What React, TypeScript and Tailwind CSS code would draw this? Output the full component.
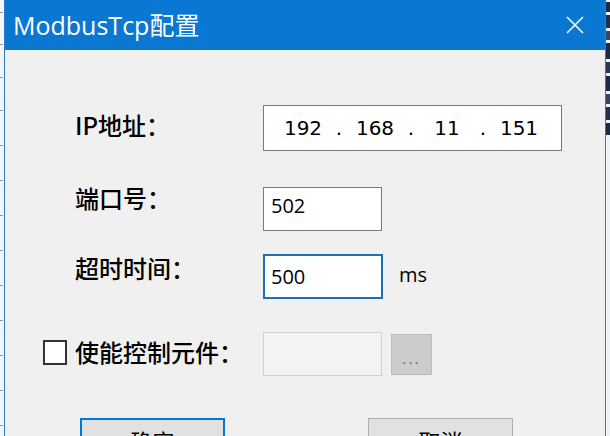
import React from "react";

// 左边背景窗口上的刻度线
const ticks = [12, 44, 77, 110, 145, 180, 215, 250, 285, 320, 355, 390, 425];

function CloseIcon() {
  return (
    <svg width="18" height="18" viewBox="0 0 18 18" fill="none">
      <path d="M1 1L17 17M17 1L1 17" stroke="white" strokeWidth="1.6" />
    </svg>
  );
}

export default function App() {
  return (
    <div className="w-[610px] h-[436px] overflow-hidden flex bg-[#eef2f6] font-['Noto_Sans_CJK_SC',sans-serif]">
      {/* 左边背景 */}
      <div className="w-[4px] h-full relative bg-[#f3f5f8]">
        {ticks.map((t) => (
          <div key={t} className="absolute left-0 w-[3px] h-[1px] bg-[#8a96a6]" style={{ top: t }} />
        ))}
      </div>

      {/* 对话框 */}
      <div className="w-[602px] h-[460px] flex flex-col border-x border-[#2f7bc4] bg-[#f0f0f0]">
        {/* 标题栏 */}
        <div className="h-[50px] shrink-0 bg-[#0a78d2] flex items-center justify-between pl-[8px] pr-[21px]">
          <div className="text-white text-[25px] leading-none font-['Open_Sans','Noto_Sans_CJK_SC',sans-serif]">
            ModbusTcp配置
          </div>
          <CloseIcon />
        </div>

        <div className="flex flex-col pl-[70px] text-black">
          {/* IP地址 */}
          <div className="flex items-start h-[46px] mt-[55px]">
            <div className="w-[188px] mt-[8px] text-[24px] leading-none font-medium">IP地址：</div>
            <div className="w-[299px] h-[46px] border border-[#7a7a7a] bg-white flex items-center pl-[8px] text-[20px] font-['DejaVu_Sans',sans-serif]">
              <div className="w-[62px] text-center">192</div>
              <div className="w-[10px] text-center">.</div>
              <div className="w-[62px] text-center">168</div>
              <div className="w-[10px] text-center">.</div>
              <div className="w-[62px] text-center">11</div>
              <div className="w-[10px] text-center">.</div>
              <div className="w-[62px] text-center">151</div>
            </div>
          </div>

          {/* 端口号 */}
          <div className="flex items-start h-[44px] mt-[36px]">
            <div className="w-[188px] mt-[-1px] text-[24px] leading-none font-medium">端口号：</div>
            <div className="w-[119px] h-[44px] border border-[#7a7a7a] bg-white flex items-center pl-[7px] pb-[6px] text-[20px] font-['Open_Sans',sans-serif]">
              502
            </div>
          </div>

          {/* 超时时间 */}
          <div className="flex items-start h-[45px] mt-[23px]">
            <div className="w-[188px] mt-[2px] text-[24px] leading-none font-medium">超时时间：</div>
            <div className="w-[120px] h-[45px] border-2 border-[#1f6fb8] bg-white flex items-center pl-[6px] text-[20px] font-['Open_Sans',sans-serif]">
              500
            </div>
            <div className="ml-[16px] mt-[6px] text-[20px] font-['Open_Sans',sans-serif]">ms</div>
          </div>

          {/* 使能控制元件 */}
          <div className="flex items-start h-[44px] mt-[33px] -ml-[32px]">
            <div className="w-[220px] flex items-start mt-[8px]">
              <div className="w-[24px] h-[25px] border-2 border-[#333] bg-white" />
              <div className="ml-[8px] text-[24px] leading-none font-medium whitespace-nowrap">使能控制元件：</div>
            </div>
            <div className="w-[119px] h-[44px] border border-[#cfcfcf] bg-[#f3f3f3]" />
            <div className="ml-[9px] mt-[2px] w-[41px] h-[41px] border border-[#bdbdbd] bg-[#cccccc] flex items-end justify-center pb-[8px] text-[13px] leading-none tracking-[2px] text-[#555] font-['DejaVu_Sans',sans-serif]">
              ...
            </div>
          </div>

          {/* 按钮 */}
          <div className="flex mt-[42px] ml-[5px]">
            <div className="w-[145px] h-[44px] border-2 border-[#0078d7] bg-[#e1e1e1] flex items-center justify-center text-[22px]">
              确定
            </div>
            <div className="ml-[143px] w-[145px] h-[44px] border border-[#adadad] bg-[#e1e1e1] flex items-center justify-center text-[22px]">
              取消
            </div>
          </div>
        </div>
      </div>

      {/* 右边背景窗口 */}
      <div className="w-[4px] h-full flex flex-col bg-[#eef3f8]">
        <div className="h-[135px] flex flex-col gap-[3px] pt-[2px]">
          <div className="h-[10px] bg-[#1d2a44]" />
          <div className="h-[14px] bg-[#24304a]" />
          <div className="h-[9px] bg-[#3a4660]" />
          <div className="h-[16px] bg-[#1d2a44]" />
          <div className="h-[12px] bg-[#2c3852]" />
          <div className="h-[15px] bg-[#1d2a44]" />
          <div className="h-[10px] bg-[#3a4660]" />
          <div className="h-[14px] bg-[#24304a]" />
          <div className="h-[12px] bg-[#1d2a44]" />
        </div>
      </div>
    </div>
  );
}
